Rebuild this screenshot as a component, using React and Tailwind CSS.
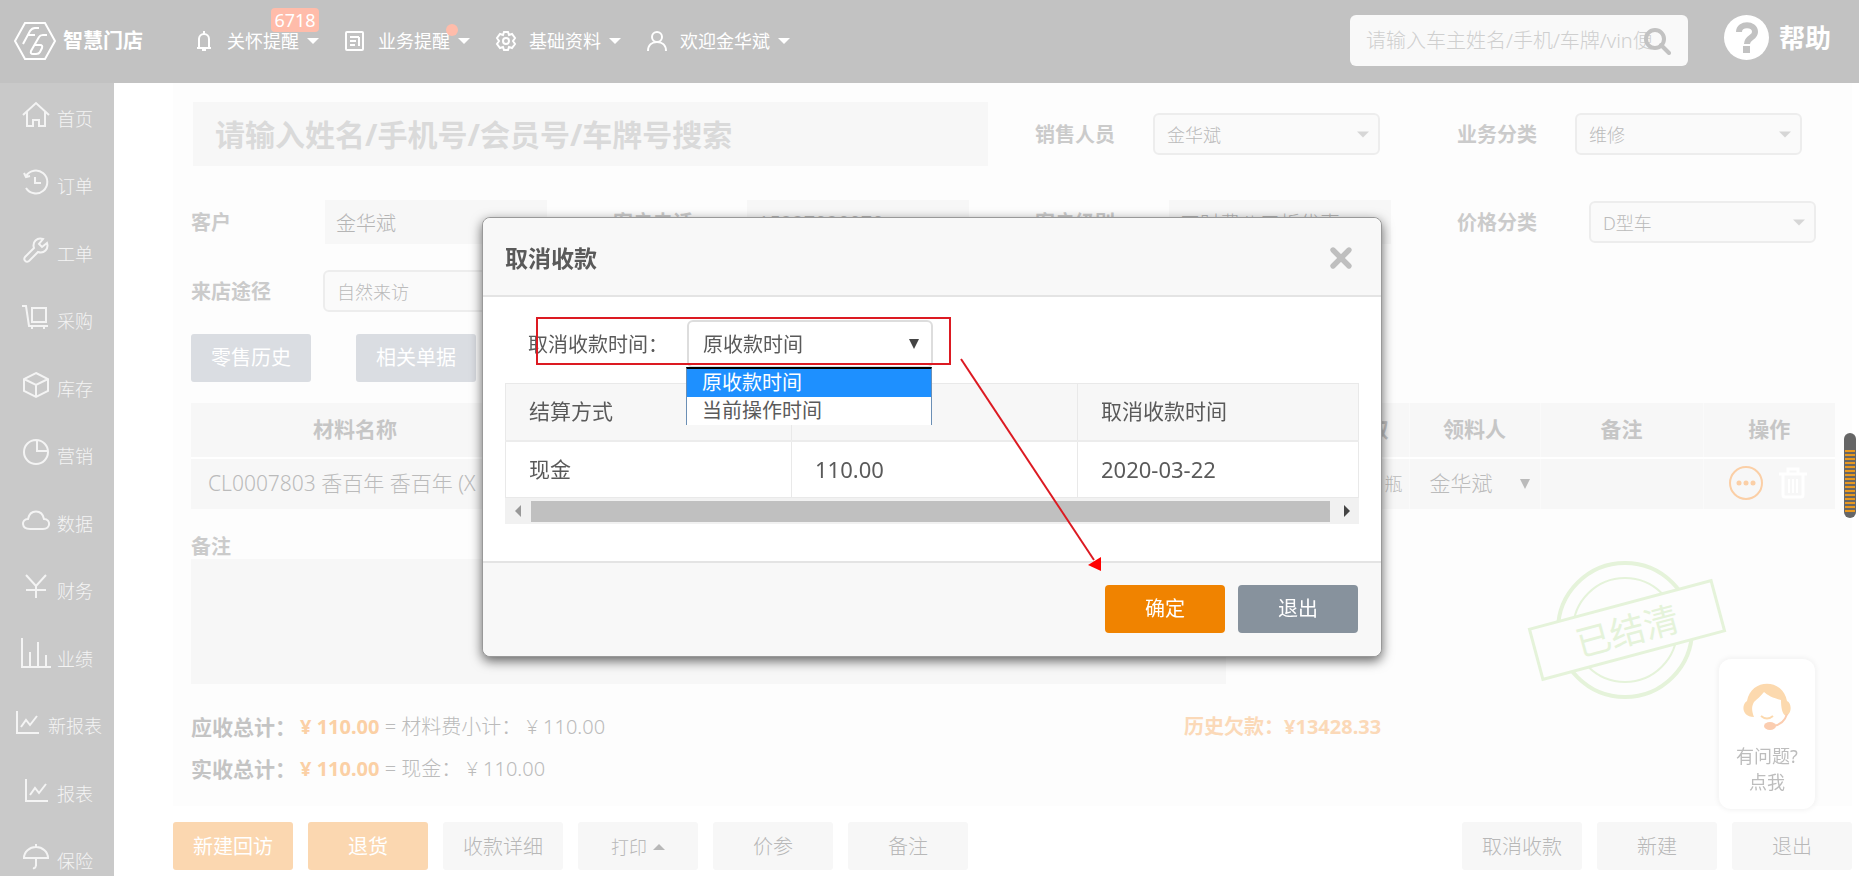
import { X } from 'lucide-react';

const menus = [
  { label: '首页', icon: 'home' },
  { label: '订单', icon: 'history' },
  { label: '工单', icon: 'wrench' },
  { label: '采购', icon: 'cart' },
  { label: '库存', icon: 'box' },
  { label: '营销', icon: 'pie' },
  { label: '数据', icon: 'cloud' },
  { label: '财务', icon: 'yen' },
  { label: '业绩', icon: 'bars' },
  { label: '新报表', icon: 'line' },
  { label: '报表', icon: 'line' },
  { label: '保险', icon: 'umbrella' },
];

const menuPaths = {
  home: 'M0 13 L13 1 L26 13 M4 10 V24 H10 V18 H16 V24 H22 V10',
  history: 'M3 7 A11.5 11.5 0 1 1 3 19 M1 4 L3 8 L7 7 M12 8 V14 H18',
  wrench: 'M24 6 L19 10 L16 7 L20 2 C14 0 9 5 11 11 L2 20 C0 23 3 26 6 24 L15 15 C21 17 26 12 24 6 Z',
  cart: 'M-1 2 H3 L6 22 H25 M9 4 H23 V18 H9 Z M9 22 V25 M21 22 V25',
  box: 'M13 1 L25 7 V19 L13 25 L1 19 V7 Z M1 7 L13 13 L25 7 M13 13 V25',
  pie: 'M13 1 A12 12 0 1 0 25 13 A12 12 0 0 0 13 1 Z M14 1 V12 H25',
  cloud: 'M7 22 C-2 22 -2 12 5 12 C7 2 19 2 21 12 C28 12 28 22 20 22 Z',
  yen: 'M3 1 L13 12 L23 1 M13 12 V24 M3 16 H23',
  bars: 'M-1 -4 V25 H28 M7 25 V10 M15 25 V0 M23 25 V13',
  line: 'M3 2 V24 H25 M7 18 L12 11 L16 16 L23 7',
  umbrella: 'M1 14 A12 11 0 0 1 25 14 Z M13 0 V3 M13 14 V22 M10 24 Q13 25 13 20',
};

const topMenus = [
  { label: '关怀提醒', icon: 'bell', badge: '6718' },
  { label: '业务提醒', icon: 'note', dot: true },
  { label: '基础资料', icon: 'gear' },
  { label: '欢迎金华斌', icon: 'user' },
];

const topIcons = {
  bell: (
    <>
      <path d="M5 16 V8 A5 5 0 0 1 15 8 V16 M3 17 H17" />
      <path d="M8 19 H12 M10 0 V3" />
    </>
  ),
  note: (
    <>
      <rect x="1" y="1" width="17" height="18" rx="1" />
      <path d="M5 6 H14 M5 10 H11 M5 14 H10 M14 6 V15" />
    </>
  ),
  gear: (
    <>
      <path d="M8 1 H12 L13 4 L16 3 L19 7 L17 10 L19 13 L16 17 L13 16 L12 19 H8 L7 16 L4 17 L1 13 L3 10 L1 7 L4 3 L7 4 Z" />
      <circle cx="10" cy="10" r="3" />
    </>
  ),
  user: (
    <>
      <circle cx="10" cy="6" r="5" />
      <path d="M1 20 C1 14 5 11 10 11 S19 14 19 20" />
    </>
  ),
};

const Caret = ({ className }) => (
  <svg viewBox="0 0 12 6" className={className} fill="currentColor">
    <path d="M0 0 H12 L6 6 Z" />
  </svg>
);

// taller arrow of the plain browser selects
const SelectArrow = ({ className }) => (
  <svg viewBox="0 0 10 10" className={className} fill="currentColor">
    <path d="M0 0 H10 L5 10 Z" />
  </svg>
);

const Header = () => (
  <header className="flex h-[83px] shrink-0 items-center bg-[#c2c2c2] pr-7 pb-[2px] text-white">
    <a href="#home" className="flex w-[180px] items-center gap-[7px] pl-[14px]">
      <svg viewBox="0 0 42 38" className="h-[38px] w-[42px]" fill="none" stroke="currentColor" strokeWidth="2">
        <path d="M11 1 H31 L41 19 L31 37 H11 L1 19 Z" />
        <path d="M9 22 L16 9 Q18 6 21 6 H25 M14 13 H21" />
        <path d="M33 13 H29 Q26 13 25 15 L17 29 Q16 32 19 32 H22 Q25 32 26 30 L28 26 Q29 23 26 23 H21" />
      </svg>
      <span className="text-[20px] leading-6 font-bold">智慧门店</span>
    </a>
    <nav className="flex items-center gap-[26px] pl-[14px]">
      {topMenus.map((item) => (
        <a key={item.label} href="#menu" className="relative flex items-center">
          <svg viewBox="0 0 20 20" className="mr-[13px] h-5 w-5 overflow-visible" fill="none" stroke="currentColor" strokeWidth="2">
            {topIcons[item.icon]}
          </svg>
          <span className="text-[18px] leading-6">{item.label}</span>
          <Caret className="ml-2 h-[6px] w-3" />
          {item.badge && (
            <span className="absolute -top-[21px] right-0 h-6 w-12 rounded-[4px] bg-[#ffbcaa] text-center text-[18px] leading-6">
              {item.badge}
            </span>
          )}
          {item.dot && <span className="absolute -top-[5px] right-3 h-3 w-3 rounded-full bg-[#ffbcaa]" />}
        </a>
      ))}
    </nav>
    <div className="relative ml-auto flex h-[51px] w-[338px] items-center rounded-[6px] bg-[#f9f9f9] px-4">
      <input
        type="text"
        aria-label="搜索"
        placeholder="请输入车主姓名/手机/车牌/vin便"
        className="w-full bg-transparent text-[20px] font-light placeholder:text-[#cfcfcf] focus:outline-none"
      />
      <svg viewBox="0 0 28 28" className="absolute right-[17px] h-7 w-7" fill="none" stroke="#c2c2c2" strokeWidth="4">
        <circle cx="12" cy="12" r="9" />
        <path d="M18 18 L26 26" strokeLinecap="round" />
      </svg>
    </div>
    <a href="#help" className="ml-9 flex items-center gap-[10px] pb-[6px] text-[26px] leading-8 font-bold">
      <svg viewBox="0 0 45 45" className="h-[45px] w-[45px]">
        <circle cx="22.5" cy="22.5" r="22.5" fill="#fff" />
        <path d="M15 17 C15 8 31 8 31 17 C31 23 23 22 23 29" fill="none" stroke="#c2c2c2" strokeWidth="6" />
        <rect x="19" y="31" width="7" height="7" fill="#c2c2c2" />
      </svg>
      帮助
    </a>
  </header>
);

const Sidebar = () => (
  <aside className="w-[114px] shrink-0 overflow-hidden bg-[#c9c9c9]">
    <nav className="grid h-[810px] grid-rows-12">
      {menus.map((item) => (
        <a key={item.label} href="#nav" className="flex items-center justify-center gap-2 pl-[2px] text-[#f4f4f4]">
          <svg viewBox="0 0 26 26" className="mb-1 h-[26px] w-[26px] overflow-visible" fill="none" stroke="currentColor" strokeWidth="2">
            <path d={menuPaths[item.icon]} />
          </svg>
          <span className="pt-1 text-[18px] leading-5 font-light">{item.label}</span>
        </a>
      ))}
    </nav>
  </aside>
);

const Label = ({ children, htmlFor }) => (
  <label htmlFor={htmlFor} className="block shrink-0 pt-[2px] text-[20px] leading-6 font-bold text-[#cbcbcb]">
    {children}
  </label>
);

const SelectField = ({ id, label, value, labelWidth }) => (
  <div className="flex items-center">
    <div className={labelWidth}>
      <Label htmlFor={id}>{label}</Label>
    </div>
    <div className="relative w-[227px]">
      <select
        id={id}
        className="h-[42px] w-full appearance-none rounded-[6px] border-2 border-[#ededed] bg-[#fafafa] px-3 pt-[2px] text-[18px] font-light text-[#bbb]"
      >
        <option>{value}</option>
      </select>
      <Caret className="pointer-events-none absolute top-[18px] right-[11px] h-[7px] w-3 text-[#d6d6d6]" />
    </div>
  </div>
);

const TextField = ({ id, label, value }) => (
  <div className="flex items-center">
    <div className="w-[134px]">
      <Label htmlFor={id}>{label}</Label>
    </div>
    <input
      id={id}
      readOnly
      defaultValue={value}
      className="h-11 w-[222px] bg-[#f7f7f7] px-[11px] text-[20px] font-light text-[#b5b5b5]"
    />
  </div>
);

const MaterialTable = () => (
  <table className="mt-[21px] w-full table-fixed text-[21px] text-[#bbb]">
    <colgroup>
      <col className="w-[328px]" />
      <col />
      <col className="w-[131px]" />
      <col className="w-[131px]" />
      <col className="w-[163px]" />
      <col className="w-[132px]" />
    </colgroup>
    <thead>
      <tr className="h-[55px] border-b-2 border-white bg-[#f7f7f7] text-[#c6c6c6]">
        <th>材料名称</th>
        <th />
        <th className="border-r border-[#fafafa] pr-5 text-right">领取</th>
        <th className="border-r border-[#fafafa]">领料人</th>
        <th className="border-r border-[#fafafa]">备注</th>
        <th>操作</th>
      </tr>
    </thead>
    <tbody>
      <tr className="h-[51px] bg-[#f7f7f7] font-light">
        <td colSpan={2} className="pl-[17px] whitespace-nowrap">
          CL0007803 香百年 香百年 (X
        </td>
        <td className="border-r border-[#fafafa] pr-[6px] text-right text-[18px]">瓶</td>
        <td className="border-r border-[#fafafa] px-5">
          <span className="flex items-center justify-between">
            金华斌
            <SelectArrow className="-mr-[10px] h-[10px] w-[10px]" />
          </span>
        </td>
        <td className="border-r border-[#fafafa]" />
        <td>
          <div className="flex items-center gap-4 pb-[2px] pl-[25px]">
            <button type="button" aria-label="更多">
              <svg viewBox="0 0 34 34" className="h-[34px] w-[34px]" fill="#fbcfa6">
                <circle cx="17" cy="17" r="16" fill="none" stroke="#fbcfa6" strokeWidth="2" />
                <circle cx="10" cy="17" r="2.5" />
                <circle cx="17" cy="17" r="2.5" />
                <circle cx="24" cy="17" r="2.5" />
              </svg>
            </button>
            <button type="button" aria-label="删除">
              <svg viewBox="0 0 28 32" className="h-8 w-7" fill="none" stroke="#fff" strokeWidth="3">
                <path d="M0 7 H28 M9 6 V2 H19 V6 M4 7 V28 Q4 30 6 30 H22 Q24 30 24 28 V7" />
                <path d="M10 12 V26 M14 12 V26 M18 12 V26" strokeWidth="2" />
              </svg>
            </button>
          </div>
        </td>
      </tr>
    </tbody>
  </table>
);

const Stamp = () => (
  <svg viewBox="0 0 200 140" className="absolute top-[477px] right-[125px] h-[140px] w-[200px]" fill="none" stroke="#e5f3da">
    <circle cx="98" cy="70" r="67" strokeWidth="4" />
    <circle cx="98" cy="70" r="52" strokeWidth="2" />
    <g transform="rotate(-15 100 70)">
      <rect x="6" y="44" width="188" height="52" fill="#fdfdfd" strokeWidth="3" />
      <text x="100" y="84" textAnchor="middle" fontSize="35" fill="#e5f3da" stroke="none">
        已结清
      </text>
    </g>
  </svg>
);

const Totals = () => (
  <div className="mt-[28px] flex text-[20px] leading-[30px] font-light text-[#bbb]">
    <dl className="flex w-[993px] flex-col gap-3">
      <div className="flex">
        <dt className="w-[109px] text-[21px] font-bold text-[#c4c4c4]">应收总计：</dt>
        <dd>
          <b className="font-bold text-[#fbd0a5]">¥ 110.00</b> = 材料费小计： ¥ 110.00
        </dd>
      </div>
      <div className="flex">
        <dt className="w-[109px] text-[21px] font-bold text-[#c4c4c4]">实收总计：</dt>
        <dd>
          <b className="font-bold text-[#fbd0a5]">¥ 110.00</b> = 现金： ¥ 110.00
        </dd>
      </div>
    </dl>
    <p className="font-bold text-[#fbd9b8]">历史欠款：¥13428.33</p>
  </div>
);

const BarButton = ({ children, primary }) => (
  <button
    type="button"
    className={`flex h-12 w-[120px] items-center justify-center gap-[6px] rounded-[3px] pt-[2px] text-[20px] ${
      primary ? 'bg-[#fbd7b0] text-white' : 'bg-[#f7f7f7] font-light text-[#b8b8b8]'
    }`}
  >
    {children}
  </button>
);

const ActionBar = () => (
  <footer className="flex gap-[15px] pt-4 pr-[7px] pb-[6px] pl-[59px]">
    <BarButton primary>新建回访</BarButton>
    <BarButton primary>退货</BarButton>
    <BarButton>收款详细</BarButton>
    <BarButton>
      <span className="text-[18px]">打印</span>
      <Caret className="h-[6px] w-3 rotate-180" />
    </BarButton>
    <BarButton>价参</BarButton>
    <BarButton>备注</BarButton>
    <div className="ml-auto flex gap-[15px]">
      <BarButton>取消收款</BarButton>
      <BarButton>新建</BarButton>
      <BarButton>退出</BarButton>
    </div>
  </footer>
);

const HelpCard = () => (
  <a
    href="#service"
    className="fixed right-11 bottom-[67px] flex h-[150px] w-24 flex-col items-center rounded-[12px] bg-white pt-6 text-[18px] leading-[26px] text-[#bdbdbd] shadow-[0_0_6px_#ececec]"
  >
    <svg viewBox="0 0 48 48" className="mb-3 h-12 w-12">
      <path
        d="M4 18 C8 -5 40 -5 44 18 C49 20 49 31 43 33 C39 31 38 24 38 17 C30 15 24 12 21 9 C18 13 14 16 11 19 C8 24 9 29 11 34 C-1 34 -2 22 4 18 Z"
        fill="#fcd9ae"
      />
      <path d="M18 33 Q24 38 30 33" fill="none" stroke="#fcd9ae" strokeWidth="2" />
      <path d="M44 31 C42 38 37 42 30 43" fill="none" stroke="#fbcdb0" strokeWidth="2" />
      <ellipse cx="27" cy="43" rx="6" ry="4" fill="#fbcdb0" />
    </svg>
    <span>有问题?</span>
    <span>点我</span>
  </a>
);

const CancelDialog = () => (
  <div className="fixed inset-0 flex items-start justify-center pt-[217px] pl-[5px]">
    <div
      role="dialog"
      aria-labelledby="dialog-title"
      className="relative w-[900px] rounded-[8px] border border-[#999] bg-white text-[#5a5a5a] shadow-[0_4px_12px_rgba(0,0,0,0.6)]"
    >
      <div className="flex h-[79px] items-center justify-between rounded-t-[8px] border-b-2 border-[#e4e4e4] bg-[#f8f8f8] pt-[2px] pr-6 pl-[22px]">
        <h2 id="dialog-title" className="text-[23px] leading-8 font-bold">
          取消收款
        </h2>
        <button type="button" aria-label="关闭" className="text-[#bfbfbf]">
          <X size={32} strokeWidth={4} />
        </button>
      </div>

      <div className="h-[264px] px-[22px] pt-[23px]">
        <div className="flex items-center pl-[23px] text-[20px]">
          <label htmlFor="cancel-time" className="w-[159px] pt-[2px]">
            取消收款时间：
          </label>
          <div className="relative">
            <select
              id="cancel-time"
              className="h-12 w-[246px] appearance-none rounded-[6px] border-2 border-[#ddd] bg-white px-[14px] pt-[2px]"
            >
              <option>原收款时间</option>
              <option>当前操作时间</option>
            </select>
            <SelectArrow className="pointer-events-none absolute top-[19px] right-[14px] h-[10px] w-[10px] text-[#444]" />
            <ul
              role="listbox"
              className="absolute top-[47px] -left-px w-[246px] border-x border-t-2 border-x-[#6b8fb5] border-t-black bg-white leading-7"
            >
              <li role="option" aria-selected="true" className="bg-[#1e90ff] pl-[15px] text-white">
                原收款时间
              </li>
              <li role="option" aria-selected="false" className="pl-[15px]">
                当前操作时间
              </li>
            </ul>
          </div>
        </div>

        <table className="mt-[15px] w-full table-fixed border border-[#e9e9e9] text-left text-[21px]">
          <colgroup>
            <col className="w-[286px]" />
            <col className="w-[286px]" />
            <col />
          </colgroup>
          <thead>
            <tr className="h-[57px] border-b-2 border-[#ececec] bg-[#f7f7f7]">
              <th className="border-r border-[#e9e9e9] pl-[23px] font-normal">结算方式</th>
              <th className="border-r border-[#e9e9e9] pl-[23px] font-normal" />
              <th className="pl-[23px] font-normal">取消收款时间</th>
            </tr>
          </thead>
          <tbody>
            <tr className="h-[57px]">
              <td className="border-r border-[#e9e9e9] pl-[23px]">现金</td>
              <td className="border-r border-[#e9e9e9] pl-[23px] text-[22px]">110.00</td>
              <td className="pl-[23px] text-[22px]">2020-03-22</td>
            </tr>
          </tbody>
        </table>
        <div className="flex h-[26px] items-center bg-[#f1f1f1]">
          <Caret className="mx-[7px] h-[6px] w-3 rotate-90 text-[#999]" />
          <div className="h-[21px] grow bg-[#c0c0c0]" />
          <Caret className="mr-[6px] ml-[11px] h-[6px] w-3 -rotate-90 text-[#444]" />
        </div>
      </div>

      <div className="flex h-[95px] justify-end gap-[13px] rounded-b-[8px] border-t-2 border-[#e4e4e4] bg-[#f8f8f8] pt-[22px] pr-[23px] text-[20px] text-white">
        <button type="button" className="h-12 w-[120px] rounded-[4px] bg-[#f08300]">
          确定
        </button>
        <button type="button" className="h-12 w-[120px] rounded-[4px] bg-[#87929d]">
          退出
        </button>
      </div>

      {/* red marker and arrow over the dialog */}
      <div className="pointer-events-none absolute top-[99px] left-[53px] h-12 w-[415px] border-2 border-[#dc1a22]" />
      <svg viewBox="0 0 142 214" className="pointer-events-none absolute top-[140px] left-[477px] h-[214px] w-[142px]">
        <path d="M1 1 L134 202" stroke="#dc1a22" strokeWidth="2" />
        <path d="M141 213 L128 207 L141 199 Z" fill="#f00" />
      </svg>
    </div>
  </div>
);

const App = () => {
  return (
    <div className="flex h-screen flex-col overflow-hidden bg-white font-['Noto_Sans','Noto_Sans_CJK_SC',sans-serif]">
      <Header />
      <div className="flex min-h-0 grow">
        <Sidebar />
        <div className="flex min-w-0 grow flex-col">
          <main className="relative mr-[7px] ml-[59px] min-h-0 grow overflow-hidden bg-[#fdfdfd] pr-[17px] pl-[18px]">
            <div className="-mr-11 grid grid-cols-4 items-center pt-[19px]">
              <input
                type="text"
                aria-label="客户搜索"
                placeholder="请输入姓名/手机号/会员号/车牌号搜索"
                className="col-span-2 mr-[47px] ml-[2px] h-16 bg-[#f7f7f7] px-[22px] text-[30px] font-bold placeholder:text-[#dadada]"
              />
              <SelectField id="sales" label="销售人员" value="金华斌" labelWidth="w-[118px]" />
              <SelectField id="biz" label="业务分类" value="维修" labelWidth="w-[118px]" />
            </div>
            <div className="-mr-11 grid grid-cols-4 items-center gap-y-[26px] pt-[34px]">
              <TextField id="customer" label="客户" value="金华斌" />
              <TextField id="phone" label="客户电话" value="15927020070" />
              <TextField id="level" label="客户级别" value="工时费八五折优惠" />
              <SelectField id="price" label="价格分类" value="D型车" labelWidth="w-[132px]" />
              <SelectField id="source" label="来店途径" value="自然来访" labelWidth="w-[132px]" />
            </div>
            <div className="flex gap-[45px] pt-[22px] text-[20px] text-white">
              <button type="button" className="h-12 w-[120px] rounded-[3px] bg-[#dadde2]">
                零售历史
              </button>
              <button type="button" className="h-12 w-[120px] rounded-[3px] bg-[#dadde2]">
                相关单据
              </button>
            </div>
            <MaterialTable />
            <div className="mt-6 flex flex-col">
              <Label htmlFor="remark">备注</Label>
              <textarea id="remark" className="h-[125px] w-[1035px] resize-none bg-[#f7f7f7]" />
            </div>
            <Totals />
            <Stamp />
          </main>
          <ActionBar />
        </div>
      </div>
      <HelpCard />
      {/* page scroll handle */}
      <div className="fixed top-[433px] right-[3px] flex h-[85px] w-3 flex-col rounded-full bg-[#666] px-px pt-[15px] pb-1">
        <div className="grow bg-[repeating-linear-gradient(#666_0px,#666_2px,#e8981f_2px,#e8981f_4px)]" />
      </div>
      <CancelDialog />
    </div>
  );
};

export default App;
